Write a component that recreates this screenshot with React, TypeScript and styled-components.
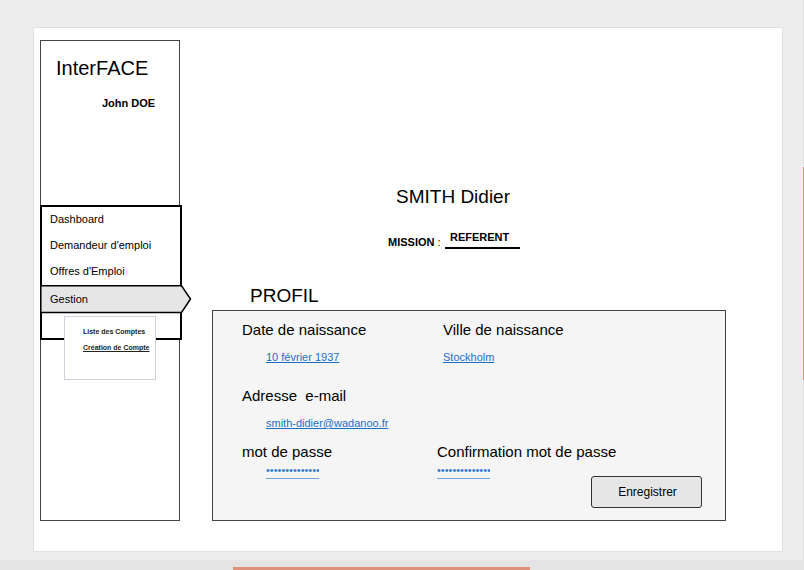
import React from "react";
import styled, { createGlobalStyle } from "styled-components";

const GlobalStyle = createGlobalStyle`
  *, *::before, *::after { box-sizing: border-box; }
  body {
    margin: 0;
    background: #ededed;
    color: #000;
    font-family: "Liberation Sans", Arial, sans-serif;
  }
  button, input { font-family: inherit; }
`;

const Page = styled.div`
  display: grid;
  grid-template-columns: minmax(0, 1fr) 1px;
  grid-template-rows: 1fr 10px;
  min-height: 100vh;
`;

const Sheet = styled.div`
  display: flex;
  align-items: flex-start;
  margin: 27px 20px 8px 33px;
  padding: 12px 56px 30px 6px;
  background: #fff;
  border: 1px solid #e0e0e0;
`;

const SideEdge = styled.div`
  padding-top: 167px;
  background: #e3e3e3;
`;

const SideAccent = styled.div`
  height: 213px;
  background: #e0917a;
`;

const BottomEdge = styled.div`
  grid-column: 1 / -1;
  display: flex;
  align-items: flex-end;
  padding-left: 29%;
  background: #e4e4e4;
`;

const BottomAccent = styled.div`
  width: 52%;
  height: 3px;
  background: #e0917a;
`;

const Sidebar = styled.aside`
  flex: none;
  align-self: stretch;
  width: 140px;
  border: 1px solid #444;
`;

const Brand = styled.h1`
  margin: 15px 0 0 15px;
  font-size: 20px;
  line-height: 24px;
  font-weight: 400;
`;

const UserName = styled.p`
  margin: 16px 0 0 61px;
  font-size: 11px;
  line-height: 14px;
  font-weight: 700;
`;

const Menu = styled.nav`
  position: relative;
  margin: 95px -3px 0 -1px;
  height: 135px;
  background: #fff;
  border: 2px solid #000;
`;

const MenuList = styled.ul`
  margin: 0;
  padding: 0;
  list-style: none;
`;

const MenuItem = styled.li`
  position: relative;
  height: 26px;
`;

const MenuLink = styled.a<{ $active?: boolean }>`
  position: relative;
  display: block;
  padding-left: 8px;
  font-size: 11px;
  line-height: ${(p) => (p.$active ? "28px" : "24px")};
  color: #000;
  text-decoration: none;
`;

const ArrowShape = styled.svg`
  position: absolute;
  left: -2px;
  top: 0;
  display: block;
`;

const SubMenu = styled.ul`
  position: absolute;
  left: 22px;
  top: 109px;
  width: 92px;
  height: 64px;
  margin: 0;
  padding: 7px 0 0 18px;
  list-style: none;
  background: #fff;
  border: 1px solid #d0d0dc;
`;

const SubLink = styled.a<{ $current?: boolean }>`
  display: block;
  font-size: 7px;
  line-height: 16px;
  font-weight: 700;
  color: #222;
  white-space: nowrap;
  text-decoration: ${(p) => (p.$current ? "underline" : "none")};
`;

const Main = styled.main`
  flex: 1;
  min-width: 0;
  padding-left: 32px;
`;

const PersonName = styled.h2`
  margin: 145px 0 0 184px;
  font-size: 19px;
  line-height: 24px;
  font-weight: 400;
`;

const Mission = styled.div`
  display: flex;
  align-items: flex-end;
  gap: 7px;
  margin: 22px 0 0 176px;
  font-size: 11px;
`;

const MissionLabel = styled.label`
  width: 50px;
  line-height: 14px;
  white-space: nowrap;
`;

const MissionInput = styled.input`
  width: 75px;
  height: 18px;
  margin: 0;
  padding: 0 0 4px 5px;
  border: 0;
  border-bottom: 2px solid #000;
  background: transparent;
  font-size: 11px;
  font-weight: 700;
  color: #000;
`;

const SectionTitle = styled.h3`
  margin: 35px 0 0 38px;
  font-size: 19px;
  line-height: 24px;
  font-weight: 400;
`;

const Panel = styled.form`
  margin-top: 2px;
  padding: 10px 23px 12px 29px;
  background: #f5f5f5;
  border: 1px solid #444;
`;

const Row = styled.div<{ $first: number; $gap?: number }>`
  display: grid;
  grid-template-columns: ${(p) => p.$first}px minmax(0, 1fr) auto;
  margin-top: ${(p) => p.$gap ?? 0}px;
`;

const Field = styled.div<{ $gap: number; $indent?: boolean }>`
  display: flex;
  flex-direction: column;
  align-items: flex-start;
  gap: ${(p) => p.$gap}px;

  input {
    margin-left: ${(p) => (p.$indent ? 24 : 0)}px;
  }
`;

const Label = styled.label`
  font-size: 15px;
  line-height: 18px;
  white-space: pre;
`;

const TextInput = styled.input`
  width: 140px;
  height: 14px;
  padding: 0;
  border: 0;
  background: transparent;
  font-size: 11px;
  color: #1a6fc9;
  text-decoration: underline;
`;

const PasswordInput = styled.input`
  width: 53px;
  height: 17px;
  padding: 0;
  border: 0;
  border-bottom: 1px solid #6fa3dc;
  background: transparent;
  font-size: 11px;
  color: #2f7dd1;
`;

const SaveButton = styled.button`
  align-self: end;
  width: 111px;
  height: 32px;
  margin-top: 33px;
  padding: 0 0 0 2px;
  border: 1px solid #333;
  border-radius: 3px;
  background: #e6e6e6;
  font-size: 12px;
  color: #000;
`;

export default function App() {
  return (
    <>
      <GlobalStyle />
      <Page>
        <Sheet>
          <Sidebar>
            <Brand>InterFACE</Brand>
            <UserName>John DOE</UserName>
            <Menu>
              <MenuList>
                <MenuItem><MenuLink href="#dashboard">Dashboard</MenuLink></MenuItem>
                <MenuItem><MenuLink href="#demandeur">Demandeur d'emploi</MenuLink></MenuItem>
                <MenuItem><MenuLink href="#offres">Offres d'Emploi</MenuLink></MenuItem>
                <MenuItem>
                  <ArrowShape width="152" height="30" viewBox="0 0 152 30" aria-hidden="true">
                    <path d="M.8 .8H141.5L150.5 14L141.5 27.5H.8Z" fill="#e6e6e6" stroke="#000" strokeWidth="1.5" />
                  </ArrowShape>
                  <MenuLink href="#gestion" $active>Gestion</MenuLink>
                </MenuItem>
              </MenuList>
              <SubMenu>
                <li><SubLink href="#comptes">Liste des Comptes</SubLink></li>
                <li><SubLink href="#creation" $current>Création de Compte</SubLink></li>
              </SubMenu>
            </Menu>
          </Sidebar>
          <Main>
            <PersonName>SMITH Didier</PersonName>
            <Mission>
              <MissionLabel htmlFor="mission"><b>MISSION</b> :</MissionLabel>
              <MissionInput id="mission" defaultValue="REFERENT" />
            </Mission>
            <SectionTitle>PROFIL</SectionTitle>
            <Panel>
              <Row $first={201}>
                <Field $gap={11} $indent>
                  <Label htmlFor="birth-date">Date de naissance</Label>
                  <TextInput id="birth-date" defaultValue="10 février 1937" />
                </Field>
                <Field $gap={11}>
                  <Label htmlFor="birth-city">Ville de naissance</Label>
                  <TextInput id="birth-city" defaultValue="Stockholm" />
                </Field>
              </Row>
              <Row $first={201} $gap={23}>
                <Field $gap={11} $indent>
                  <Label htmlFor="email">{"Adresse  e-mail"}</Label>
                  <TextInput id="email" type="email" defaultValue="smith-didier@wadanoo.fr" />
                </Field>
              </Row>
              <Row $first={195} $gap={13}>
                <Field $gap={1} $indent>
                  <Label htmlFor="password">mot de passe</Label>
                  <PasswordInput id="password" type="password" defaultValue="motdepasse1937" />
                </Field>
                <Field $gap={1}>
                  <Label htmlFor="confirm">Confirmation mot de passe</Label>
                  <PasswordInput id="confirm" type="password" defaultValue="motdepasse1937" />
                </Field>
                <SaveButton type="button">Enregistrer</SaveButton>
              </Row>
            </Panel>
          </Main>
        </Sheet>
        <SideEdge><SideAccent /></SideEdge>
        <BottomEdge><BottomAccent /></BottomEdge>
      </Page>
    </>
  );
}
